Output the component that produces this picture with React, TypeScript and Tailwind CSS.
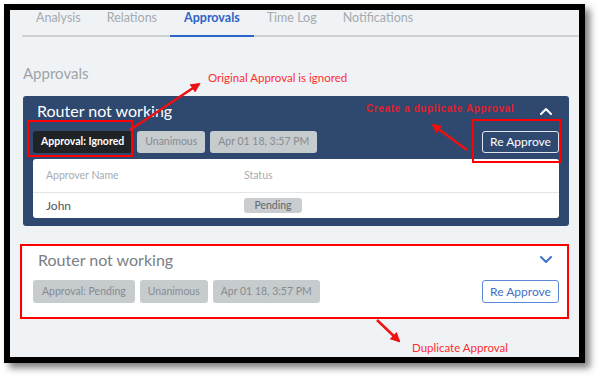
import React from "react";

const tabs = ["Analysis", "Relations", "Approvals", "Time Log", "Notifications"];

function Badge({ children, dark, wide }: { children: React.ReactNode; dark?: boolean; wide?: boolean }) {
  return (
    <span
      className={
        "h-full rounded-[3px] flex items-center text-[10.5px] " +
        (wide ? "px-[9px] " : "px-[8px] ") +
        (dark ? "bg-[#202326] text-white font-bold" : "bg-[#c6cbce] text-[#868c91]")
      }
    >
      {children}
    </span>
  );
}

function Chevron({ up, color }: { up?: boolean; color: string }) {
  return (
    <svg width="12" height="8" viewBox="0 0 12 8">
      <polyline
        points={up ? "1,7 6,2 11,7" : "1,1 6,6 11,1"}
        fill="none"
        stroke={color}
        strokeWidth="2"
        strokeLinecap="round"
        strokeLinejoin="round"
      />
    </svg>
  );
}

export default function App() {
  return (
    <div className="relative w-[599px] h-[377px] bg-white overflow-hidden font-['Lato','Open_Sans',sans-serif]">
      <div className="pl-[4px] pt-[4px]">
        <div className="w-[581px] h-[359px] border-[6px] border-black bg-[#eff3f6] shadow-[5px_5px_7px_rgba(0,0,0,0.5)] overflow-hidden">
          {/* tabs */}
          <div className="ml-[12px] flex h-[27px]">
            {tabs.map((t, i) => (
              <div
                key={t}
                className={
                  "h-[27px] text-[12.5px] leading-[16px] border-b-2 " +
                  (i === 2
                    ? "px-[14px] border-[#2d64c8] text-[#2f62c4] font-bold"
                    : "px-[13px] border-[#cdd1d4] text-[#a6aaad]") +
                  (i === 0 ? " pl-[14px]" : "")
                }
              >
                {t}
              </div>
            ))}
            <div className="flex-1 border-b-2 border-[#cdd1d4]" />
          </div>

          <div className="pl-[13px] pr-[10px]">
            <h2 className="mt-[26px] text-[15px] leading-[20px] text-[#9fa4a8]">Approvals</h2>

            {/* original approval */}
            <div className="mt-[13px] h-[130px] bg-[#2e4870] rounded-[3px] pt-[5px] pb-[8px]">
              <div className="flex items-center justify-between pl-[14px] pr-[17px] h-[20px]">
                <span className="text-[16px] leading-[20px] text-white">Router not working</span>
                <Chevron up color="#ffffff" />
              </div>
              <div className="mt-[10px] px-[10px] flex justify-between h-[22px]">
                <div className="flex gap-[5px] h-full">
                  <Badge dark>Approval: Ignored</Badge>
                  <Badge>Unanimous</Badge>
                  <Badge>Apr 01 18, 3:57 PM</Badge>
                </div>
                <button className="w-[77px] h-full rounded-[3px] border border-[#dfe5ee] text-white text-[12px]">
                  Re Approve
                </button>
              </div>
              <div className="mt-[6px] mx-[10px] h-[59px] bg-white rounded-[3px] text-[10.5px]">
                <div className="h-[34px] flex items-center pl-[13px] border-b border-[#e3e6e9] text-[#a8acb0]">
                  <span className="w-[198px]">Approver Name</span>
                  <span>Status</span>
                </div>
                <div className="h-[25px] flex items-center pl-[13px]">
                  <span className="w-[198px] text-[12px] text-[#50565b]">John</span>
                  <span className="w-[58px] h-[15px] rounded-[3px] bg-[#c9cdd0] text-[#62676b] flex items-center justify-center">
                    Pending
                  </span>
                </div>
              </div>
            </div>

            {/* duplicate approval */}
            <div className="mt-[20px] h-[71px] bg-white rounded-[3px] pt-[4px]">
              <div className="flex items-center justify-between pl-[15px] pr-[17px] h-[20px]">
                <span className="text-[16px] leading-[20px] text-[#7b8085]">Router not working</span>
                <Chevron color="#3f74cf" />
              </div>
              <div className="mt-[10px] px-[10px] flex justify-between h-[23px]">
                <div className="flex gap-[5px] h-full">
                  <Badge wide>Approval: Pending</Badge>
                  <Badge>Unanimous</Badge>
                  <Badge>Apr 01 18, 3:57 PM</Badge>
                </div>
                <button className="w-[77px] h-full rounded-[3px] border border-[#5b8ad8] text-[#3f6fc6] text-[12px]">
                  Re Approve
                </button>
              </div>
            </div>
          </div>
        </div>
      </div>

      {/* annotations */}
      <div className="absolute left-[27px] top-[120px] w-[106px] h-[37px] border-[2.5px] border-[#ff0000]" />
      <div className="absolute left-[472px] top-[119px] w-[89px] h-[44px] border-[2.5px] border-[#ff0000]" />
      <div className="absolute left-[20px] top-[244px] w-[549px] h-[75px] border-[2.5px] border-[#ff0000]" />

      <span className="absolute left-[208px] top-[71px] text-[11.5px] leading-[14px] text-[#ff2d2d]">
        Original Approval is ignored
      </span>
      <span className="absolute left-[366px] top-[102px] text-[10px] leading-[13px] font-bold tracking-[0.6px] text-[#e0202a] font-['Liberation_Sans',sans-serif]">
        Create a duplicate Approval
      </span>
      <span className="absolute left-[412px] top-[341px] text-[11.5px] leading-[14px] text-[#ff2d2d]">
        Duplicate Approval
      </span>

      <svg className="absolute left-0 top-0" width="599" height="377" viewBox="0 0 599 377">
        <defs>
          <marker id="ah" viewBox="0 0 10 10" refX="8" refY="5" markerWidth="4" markerHeight="4" orient="auto">
            <path d="M0,0 L10,5 L0,10 z" fill="#ee1111" />
          </marker>
        </defs>
        <line x1="130" y1="130" x2="199" y2="84" stroke="#ee1111" strokeWidth="2.5" markerEnd="url(#ah)" />
        <line x1="467" y1="150" x2="433" y2="125" stroke="#ee1111" strokeWidth="2.5" markerEnd="url(#ah)" />
        <line x1="377" y1="320" x2="399" y2="341" stroke="#ee1111" strokeWidth="2.5" markerEnd="url(#ah)" />
      </svg>
    </div>
  );
}
